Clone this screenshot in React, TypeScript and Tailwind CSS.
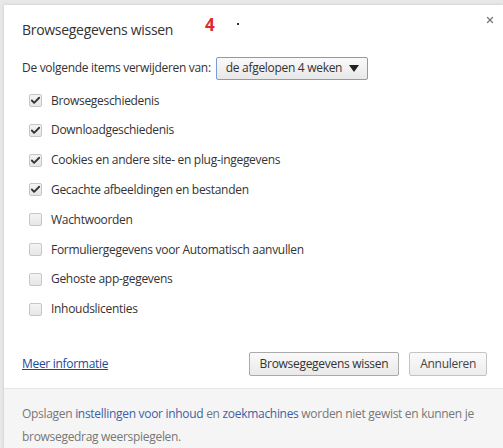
import { Check, X } from "lucide-react";

const items = [
    { label: "Browsegeschiedenis", checked: true },
    { label: "Downloadgeschiedenis", checked: true },
    { label: "Cookies en andere site- en plug-ingegevens", checked: true },
    { label: "Gecachte afbeeldingen en bestanden", checked: true },
    { label: "Wachtwoorden", checked: false },
    { label: "Formuliergegevens voor Automatisch aanvullen", checked: false },
    { label: "Gehoste app-gegevens", checked: false },
    { label: "Inhoudslicenties", checked: false },
];

function Checkbox({ checked }: { checked: boolean }) {
    return (
        <span className="flex h-[13px] w-[13px] items-center justify-center rounded-[2px] border border-[#c6c6c6] bg-gradient-to-b from-[#f4f4f4] to-[#e6e6e6]">
            {checked && <Check size={11} strokeWidth={4} className="text-[#333]" />}
        </span>
    );
}

export default function App() {
    return (
        <div
            className="h-[448px] w-[503px] overflow-hidden bg-[#e8e8e8] pl-[4px] pt-[5px] text-[13px] tracking-[-0.3px] text-[#333]"
            style={{ fontFamily: '"Open Sans", "Noto Sans", sans-serif' }}
        >
            <div className="flex h-full flex-col bg-white shadow-[0_0_3px_rgba(0,0,0,0.15)]">
                {/* header */}
                <div className="relative flex h-[44px] items-end pl-[18px]">
                    <span className="pb-[5px] text-[14px] text-[#333]">Browsegegevens wissen</span>
                    <span className="absolute left-[201px] top-[7px] text-[17px] font-bold text-[#e3262b]">4</span>
                    <span className="absolute left-[233px] top-[18px] h-[2px] w-[2px] bg-[#333]" />
                    <X size={10} strokeWidth={3} className="absolute right-[8px] top-[10px] text-[#777]" />
                </div>

                {/* range select */}
                <div className="mt-[12px] flex items-center pl-[18px]">
                    <span className="text-[12px]">De volgende items verwijderen van:</span>
                    <div className="ml-[5px] flex h-[23px] w-[152px] items-center justify-between rounded-[2px] border border-[#7a9cd3] bg-gradient-to-b from-[#fafafa] to-[#e8e8e8] pl-[9px] pr-[8px]">
                        <span className="text-[12px]">de afgelopen 4 weken</span>
                        <span className="h-0 w-0 border-x-[5px] border-t-[7px] border-x-transparent border-t-[#222]" />
                    </div>
                </div>

                {/* data types */}
                <div className="mt-[6px] flex flex-col pl-[25px]">
                    {items.map((item) => (
                        <label key={item.label} className="flex h-[29.8px] items-center gap-[9px] text-[12px]">
                            <Checkbox checked={item.checked} />
                            <span>{item.label}</span>
                        </label>
                    ))}
                </div>

                {/* actions */}
                <div className="mt-[28px] flex items-center justify-between pl-[18px] pr-[16px]">
                    <a className="text-[12px] text-[#1a4a9c] underline">Meer informatie</a>
                    <div className="flex gap-[10px]">
                        <button className="h-[24px] rounded-[2px] border border-[#aaa] bg-gradient-to-b from-[#fafafa] to-[#e9e9e9] px-[10px] text-[12px] text-[#333]">
                            Browsegegevens wissen
                        </button>
                        <button className="h-[24px] rounded-[2px] border border-[#c4c4c4] bg-gradient-to-b from-[#fafafa] to-[#ededed] px-[10px] text-[12px] text-[#444]">
                            Annuleren
                        </button>
                    </div>
                </div>

                {/* footer note */}
                <div className="mt-[12px] flex-1 border-t border-[#e6e6e6] bg-[#f5f5f5] pl-[18px] pr-[14px] pt-[13px] text-[12px] leading-[23px] text-[#777]">
                    <p>
                        Opslagen <span className="text-[#3e5fa6]">instellingen voor inhoud</span> en{" "}
                        <span className="text-[#3e5fa6]">zoekmachines</span> worden niet gewist en kunnen je
                        browsegedrag weerspiegelen.
                    </p>
                </div>
            </div>
        </div>
    );
}
